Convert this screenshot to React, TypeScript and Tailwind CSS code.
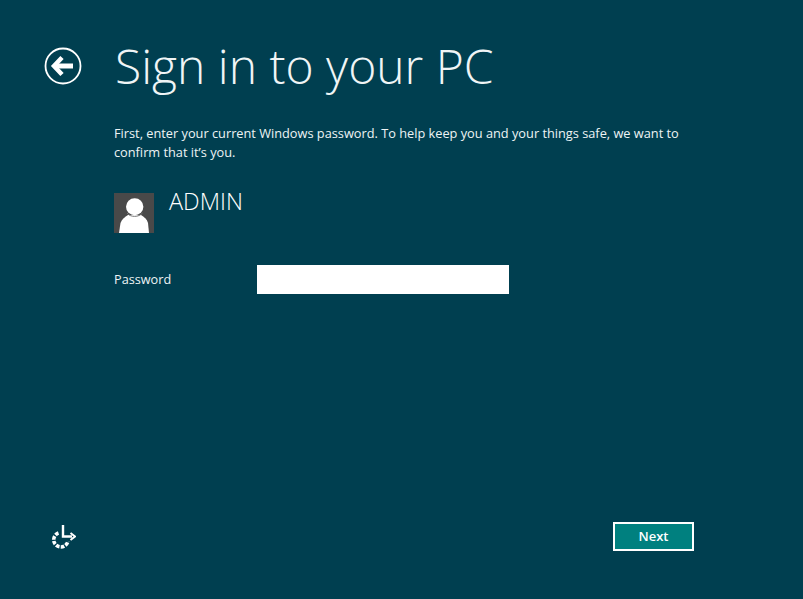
const font = { fontFamily: '"Open Sans", "Noto Sans", sans-serif' };

function BackIcon() {
  return (
    <svg width="38" height="38" viewBox="0 0 38 38" fill="none" className="shrink-0">
      <circle cx="19" cy="19" r="17.5" stroke="#fff" strokeWidth="1.8" />
      <path d="M11 19 H29" stroke="#fff" strokeWidth="5" />
      <path d="M18 10.5 L10 19 L18 27.5" stroke="#fff" strokeWidth="4.5" />
    </svg>
  );
}

function EaseIcon() {
  return (
    <svg width="26" height="24" viewBox="0 0 26 24" fill="none">
      <path d="M8.5 8 A7.2 7.2 0 1 0 18 16" stroke="#fff" strokeWidth="3.6" strokeDasharray="3.6 1.3" />
      <path d="M13 0 V11.5 H22" stroke="#fff" strokeWidth="2.4" />
      <path d="M20.5 8 L25 11.5 L20.5 15" stroke="#fff" strokeWidth="2" />
    </svg>
  );
}

function UserTile() {
  return (
    <div className="w-10 h-10 bg-[#494949] overflow-hidden shrink-0">
      <svg width="40" height="40" viewBox="0 0 40 40">
        <path d="M5 40 L6.5 30 C8 26 11 24 14 22 L27 22 C30 24 33 26 34 30 L35 40 Z" fill="#fff" />
        <ellipse cx="20.7" cy="13.7" rx="8.7" ry="8.5" fill="#fff" />
        <path d="M13 20 C16 24.5 25 24.5 28.5 20" stroke="#777" strokeWidth="1" fill="none" />
      </svg>
    </div>
  );
}

export default function App() {
  return (
    <div style={font} className="w-[803px] h-[599px] bg-[#003f50] text-white flex flex-col overflow-hidden">
      <div className="flex items-center pl-[44px] pt-[36px] gap-[33px]">
        <BackIcon />
        <h1 className="text-[48px] leading-[60px] font-light text-[#f0f5f6]">Sign in to your PC</h1>
      </div>

      <div className="pl-[114px] pt-[28px] flex-1">
        <p className="text-[12.78px] leading-[19px] w-[580px] text-[#eef4f5]">
          First, enter your current Windows password. To help keep you and your things safe, we want to confirm that it’s you.
        </p>

        <div className="flex items-start gap-[15px] mt-[31px]">
          <UserTile />
          <span className="text-[23.5px] leading-[30px] font-light -mt-[7px]">ADMIN</span>
        </div>

        <div className="flex items-center mt-[32px]">
          <label className="w-[143px] pt-[1px] text-[12.7px] text-[#eef4f5]">Password</label>
          <input className="w-[252px] h-[29px] bg-white outline-none" type="password" />
        </div>
      </div>

      <div className="flex items-center justify-between pl-[50px] pr-[109px] pb-[48px]">
        <EaseIcon />
        <button className="w-[81px] h-[29px] bg-[#00807f] border-2 border-white text-[13px] font-semibold text-white">
          Next
        </button>
      </div>
    </div>
  );
}
